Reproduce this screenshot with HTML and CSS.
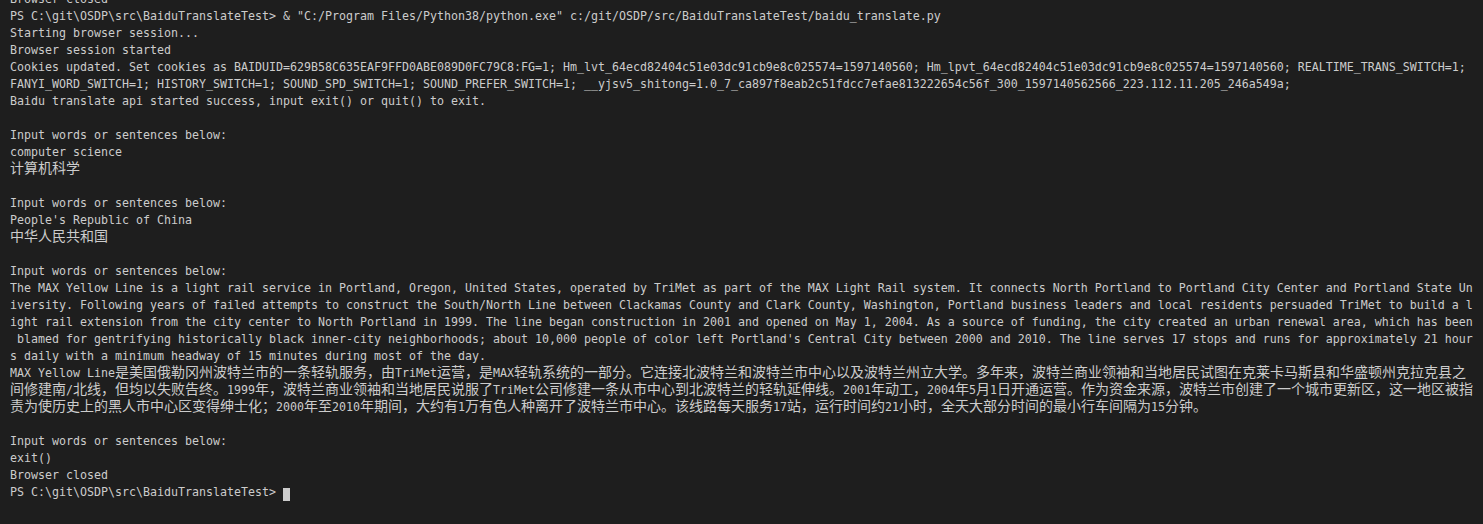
FILE: index.html
```html
<!DOCTYPE html>
<html lang="en">
<head>
    <meta charset="UTF-8">
    <meta name="viewport" content="width=device-width, initial-scale=1.0">
    <title>Terminal - baidu_translate.py</title>
    <link rel="stylesheet" href="styles.css">
</head>
<body>

    <div class="terminal">
        <div class="ln">Browser closed</div>
        <div class="ln">PS C:\git\OSDP\src\BaiduTranslateTest&gt; &amp; "C:/Program Files/Python38/python.exe" c:/git/OSDP/src/BaiduTranslateTest/baidu_translate.py</div>
        <div class="ln">Starting browser session...</div>
        <div class="ln">Browser session started</div>
        <div class="ln">Cookies updated. Set cookies as BAIDUID=629B58C635EAF9FFD0ABE089D0FC79C8:FG=1; Hm_lvt_64ecd82404c51e03dc91cb9e8c025574=1597140560; Hm_lpvt_64ecd82404c51e03dc91cb9e8c025574=1597140560; REALTIME_TRANS_SWITCH=1;</div>
        <div class="ln">FANYI_WORD_SWITCH=1; HISTORY_SWITCH=1; SOUND_SPD_SWITCH=1; SOUND_PREFER_SWITCH=1; __yjsv5_shitong=1.0_7_ca897f8eab2c51fdcc7efae813222654c56f_300_1597140562566_223.112.11.205_246a549a;</div>
        <div class="ln">Baidu translate api started success, input exit() or quit() to exit.</div>
        <div class="ln"></div>

        <!-- first query -->
        <div class="ln">Input words or sentences below:</div>
        <div class="ln">computer science</div>
        <div class="ln"><span class="zh">计算机科学</span></div>
        <div class="ln"></div>

        <!-- second query -->
        <div class="ln">Input words or sentences below:</div>
        <div class="ln">People's Republic of China</div>
        <div class="ln"><span class="zh">中华人民共和国</span></div>
        <div class="ln"></div>

        <!-- long paragraph, wrapped by the terminal -->
        <div class="ln">Input words or sentences below:</div>
        <div class="ln">The MAX Yellow Line is a light rail service in Portland, Oregon, United States, operated by TriMet as part of the MAX Light Rail system. It connects North Portland to Portland City Center and Portland State Un</div>
        <div class="ln">iversity. Following years of failed attempts to construct the South/North Line between Clackamas County and Clark County, Washington, Portland business leaders and local residents persuaded TriMet to build a l</div>
        <div class="ln">ight rail extension from the city center to North Portland in 1999. The line began construction in 2001 and opened on May 1, 2004. As a source of funding, the city created an urban renewal area, which has been</div>
        <div class="ln"> blamed for gentrifying historically black inner-city neighborhoods; about 10,000 people of color left Portland's Central City between 2000 and 2010. The line serves 17 stops and runs for approximately 21 hour</div>
        <div class="ln">s daily with a minimum headway of 15 minutes during most of the day.</div>
        <div class="ln">MAX Yellow Line<span class="zh">是美国俄勒冈州波特兰市的一条轻轨服务，由</span>TriMet<span class="zh">运营，是</span>MAX<span class="zh">轻轨系统的一部分。它连接北波特兰和波特兰市中心以及波特兰州立大学。多年来，波特兰商业领袖和当地居民试图在克莱卡马斯县和华盛顿州克拉克县之</span></div>
        <div class="ln"><span class="zh">间修建南</span>/<span class="zh">北线，但均以失败告终。</span>1999<span class="zh">年，波特兰商业领袖和当地居民说服了</span>TriMet<span class="zh">公司修建一条从市中心到北波特兰的轻轨延伸线。</span>2001<span class="zh">年动工，</span>2004<span class="zh">年</span>5<span class="zh">月</span>1<span class="zh">日开通运营。作为资金来源，波特兰市创建了一个城市更新区，这一地区被指</span></div>
        <div class="ln"><span class="zh">责为使历史上的黑人市中心区变得绅士化；</span>2000<span class="zh">年至</span>2010<span class="zh">年期间，大约有</span>1<span class="zh">万有色人种离开了波特兰市中心。该线路每天服务</span>17<span class="zh">站，运行时间约</span>21<span class="zh">小时，全天大部分时间的最小行车间隔为</span>15<span class="zh">分钟。</span></div>
        <div class="ln"></div>

        <!-- exit -->
        <div class="ln">Input words or sentences below:</div>
        <div class="ln">exit()</div>
        <div class="ln">Browser closed</div>
        <div class="ln">PS C:\git\OSDP\src\BaiduTranslateTest&gt; <span class="cursor"> </span></div>
    </div>

</body>
</html>
```

FILE: styles.css
```css
html, body {
    height: 100%;
}

body {
    margin: 0;
    background-color: #1e1e1e;
    color: #cccccc;
    overflow: hidden;
}

.terminal {
    margin-top: -9px; /* first line is scrolled half out of view */
    padding-left: 10px;
    font-family: "DejaVu Sans Mono", "Liberation Mono", monospace;
    font-size: 11.63px;
    line-height: 17px;
}

.ln {
    height: 17px;
    white-space: pre;
    overflow: hidden;
}

/* CJK glyphs take two terminal cells (14px); small line-height keeps the row baseline */
.zh {
    font-family: "Noto Sans CJK SC", sans-serif;
    font-size: 14px;
    line-height: 12px;
}

.cursor {
    display: inline-block;
    width: 7px;
    height: 16px;
    vertical-align: -4px;
    background-color: #cccccc;
}
```
